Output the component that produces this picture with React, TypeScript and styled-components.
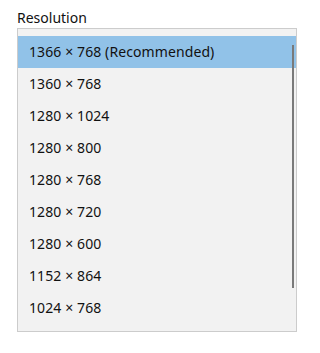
import React from "react";
import styled, { createGlobalStyle } from "styled-components";

const Global = createGlobalStyle`
  html, body { margin: 0; padding: 0; background: #ffffff; }
  body { font-family: "Noto Sans", "Open Sans", sans-serif; color: #000; }
`;

const Page = styled.div`
  width: 314px;
  height: 353px;
  padding: 8px 0 0 17px;
  box-sizing: border-box;
`;

const Label = styled.div`
  font-size: 14px;
  line-height: 20px;
  height: 20px;
  color: #111111;
`;

const ListBox = styled.div`
  position: relative;
  width: 280px;
  height: 304px;
  box-sizing: border-box;
  border: 1px solid #cccccc;
  background: #f2f2f2;
  padding: 7px 0;
  display: flex;
  flex-direction: column;
`;

const Row = styled.div<{ $selected?: boolean }>`
  height: 32px;
  flex: 0 0 32px;
  box-sizing: border-box;
  display: flex;
  align-items: center;
  padding: 0 0 2px 11px;
  font-size: 14px;
  letter-spacing: 0.1px;
  color: #111111;
  background: ${(p) => (p.$selected ? "#91c2e8" : "transparent")};
`;

const ScrollThumb = styled.div`
  position: absolute;
  right: 2px;
  top: 16px;
  width: 2px;
  height: 243px;
  background: #7a7a7a;
`;

const items = [
  "1366 × 768 (Recommended)",
  "1360 × 768",
  "1280 × 1024",
  "1280 × 800",
  "1280 × 768",
  "1280 × 720",
  "1280 × 600",
  "1152 × 864",
  "1024 × 768",
];

export default function App() {
  return (
    <>
      <Global />
      <Page>
        <Label>Resolution</Label>
        <ListBox>
          {items.map((t, i) => (
            <Row key={t} $selected={i === 0}>
              {t}
            </Row>
          ))}
          <ScrollThumb />
        </ListBox>
      </Page>
    </>
  );
}
